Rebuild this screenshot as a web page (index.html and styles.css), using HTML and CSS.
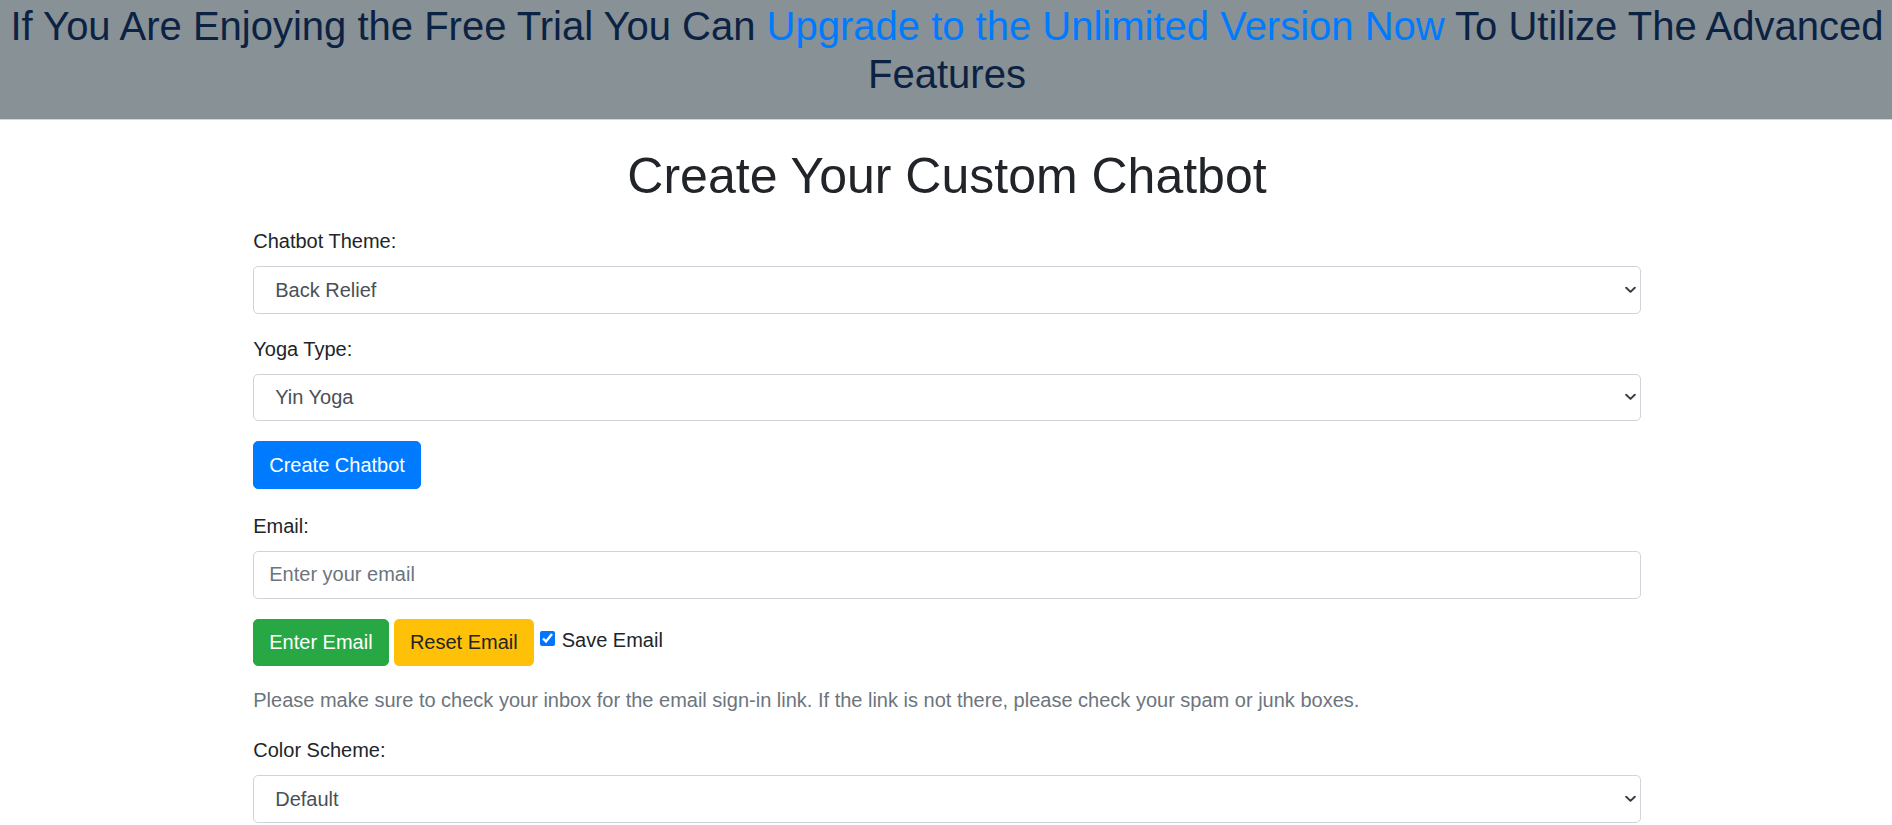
FILE: index.html
```html
<!DOCTYPE html>
<html lang="en">
<head>
<meta charset="utf-8">
<title>Create Your Custom Chatbot</title>
<link rel="stylesheet" href="styles.css">
</head>
<body>
<div class="banner">
  <h2 class="banner-text">If You Are Enjoying the Free Trial You Can <a class="banner-link" href="#">Upgrade to the Unlimited Version Now</a> To Utilize The Advanced Features</h2>
</div>
<div class="container">
  <h1 class="title">Create Your Custom Chatbot</h1>
  <div class="form-group">
    <label class="form-label" for="theme">Chatbot Theme:</label>
    <div class="select-wrap">
      <select class="form-select" id="theme"><option>Back Relief</option></select>
      <svg class="chevron" viewBox="0 0 11 7" width="11" height="7"><path d="M1.2 1.2 L5.5 5.4 L9.8 1.2" fill="none" stroke="#3b3d40" stroke-width="2" stroke-linecap="round" stroke-linejoin="round"/></svg>
    </div>
  </div>
  <div class="form-group">
    <label class="form-label" for="yoga">Yoga Type:</label>
    <div class="select-wrap">
      <select class="form-select" id="yoga"><option>Yin Yoga</option></select>
      <svg class="chevron" viewBox="0 0 11 7" width="11" height="7"><path d="M1.2 1.2 L5.5 5.4 L9.8 1.2" fill="none" stroke="#3b3d40" stroke-width="2" stroke-linecap="round" stroke-linejoin="round"/></svg>
    </div>
  </div>
  <div class="create-row">
    <button class="btn btn-primary" type="button">Create Chatbot</button>
  </div>
  <div class="form-group">
    <label class="form-label" for="email">Email:</label>
    <input class="form-input" id="email" type="email" placeholder="Enter your email">
  </div>
  <div class="email-row">
    <button class="btn btn-success" type="button">Enter Email</button>
    <button class="btn btn-warning" type="button">Reset Email</button>
    <input class="check" id="save" type="checkbox" checked>
    <label class="check-label" for="save">Save Email</label>
  </div>
  <p class="help">Please make sure to check your inbox for the email sign-in link. If the link is not there, please check your spam or junk boxes.</p>
  <div class="form-group last">
    <label class="form-label" for="scheme">Color Scheme:</label>
    <div class="select-wrap">
      <select class="form-select" id="scheme"><option>Default</option></select>
      <svg class="chevron" viewBox="0 0 11 7" width="11" height="7"><path d="M1.2 1.2 L5.5 5.4 L9.8 1.2" fill="none" stroke="#3b3d40" stroke-width="2" stroke-linecap="round" stroke-linejoin="round"/></svg>
    </div>
  </div>
</div>
</body>
</html>
```
FILE: styles.css
```css
* { box-sizing: border-box; }
html, body { margin: 0; padding: 0; }
body {
  font-family: "Liberation Sans", Arial, sans-serif;
  font-size: 20px;
  line-height: 30px;
  color: #212529;
  background: #ffffff;
}
.banner {
  background: #879196;
  padding: 2px 0 21px 2px;
  border-bottom: 1px solid #f4c9cc;
  text-align: center;
}
.banner-text {
  margin: 0;
  font-size: 40px;
  line-height: 48px;
  font-weight: 400;
  color: #0c2243;
}
.banner-link {
  color: #007bff;
  text-decoration: none;
}
.container {
  width: 1389.5px;
  padding-left: 2px;
  margin: 0 auto;
}
.title {
  margin: 26px 0 20px;
  font-size: 50px;
  line-height: 60px;
  font-weight: 400;
  text-align: center;
  color: #212529;
}
.form-group { margin-bottom: 20px; }
.form-group.last { margin-bottom: 0; }
.form-label {
  display: block;
  margin-bottom: 10px;
}
.select-wrap { position: relative; }
.form-select, .form-input {
  display: block;
  width: 100%;
  height: 47.5px;
  margin: 0;
  border: 1px solid #ced4da;
  border-radius: 5px;
  background: #ffffff;
  font-family: inherit;
  font-size: 20px;
  line-height: 30px;
  color: #495057;
  outline: none;
}
.form-select {
  appearance: none;
  -webkit-appearance: none;
  padding: 0 40px 0 21px;
}
.form-input {
  padding: 0 15px;
}
.form-input::placeholder { color: #6c757d; opacity: 1; }
.chevron {
  position: absolute;
  right: 5px;
  top: 50%;
  transform: translateY(-50%);
  pointer-events: none;
}
.btn {
  display: inline-block;
  height: 47.5px;
  padding: 7.75px 15px;
  border: 1px solid transparent;
  border-radius: 5px;
  font-family: inherit;
  font-size: 20px;
  line-height: 30px;
  cursor: pointer;
}
.btn-primary { background: #007bff; border-color: #007bff; color: #ffffff; }
.btn-success { background: #28a745; border-color: #28a745; color: #ffffff; }
.btn-warning { background: #ffc107; border-color: #ffc107; color: #212529; }
.create-row { margin-bottom: 22.5px; }
.email-row {
  display: flex;
  align-items: flex-start;
  gap: 5.3px;
  margin-bottom: 19px;
}
.check {
  width: 15px;
  height: 15px;
  margin: 12.2px 0 0 1px;
}
.check-label {
  margin: 6.3px 0 0 1.4px;
}
.help {
  margin: 0 0 20px;
  color: #6c757d;
}
```
